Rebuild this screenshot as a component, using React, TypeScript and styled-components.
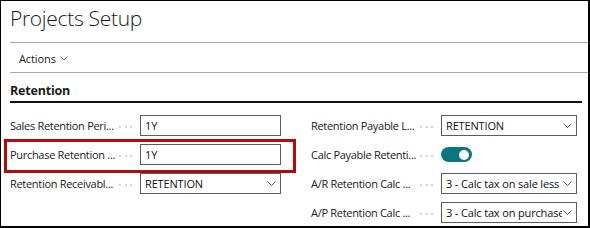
import React from "react";
import styled, { createGlobalStyle } from "styled-components";

const Global = createGlobalStyle`
  html, body { margin: 0; padding: 0; background: #fff; }
  body { font-family: "Open Sans", "Segoe UI", sans-serif; color: #212121; }
  * { box-sizing: border-box; }
`;

const Frame = styled.div`
  width: 590px;
  height: 228px;
  border-style: solid;
  border-color: #000;
  border-width: 1px 2px 2px 1px;
  background: #fff;
  display: flex;
  flex-direction: column;
  overflow: hidden;
`;

const TitleBar = styled.div`
  margin-left: 9px;
  height: 42px;
  border-bottom: 1px solid #a9a9a9;
  display: flex;
  align-items: center;
  padding-bottom: 8px;
`;

const Title = styled.h1`
  margin: 0;
  font-family: "Open Sans", sans-serif;
  font-weight: 300;
  font-size: 21px;
  letter-spacing: -0.3px;
  color: #1a1a1a;
`;

const ActionBar = styled.div`
  margin-left: 9px;
  height: 30px;
  border-bottom: 1px solid #a9a9a9;
  display: flex;
  align-items: center;
  padding-left: 9px;
  padding-top: 1px;
  gap: 4px;
  font-size: 11px;
  letter-spacing: -0.1px;
  color: #212121;
`;

const SectionHeader = styled.div`
  margin-left: 9px;
  margin-right: 6px;
  height: 30px;
  border-bottom: 2px solid #111;
  display: flex;
  align-items: center;
  padding-top: 6px;
  font-size: 12.5px;
  font-weight: 700;
  letter-spacing: -0.2px;
  color: #1a1a1a;
`;

const Columns = styled.div`
  display: grid;
  grid-template-columns: 271px 266px;
  column-gap: 30px;
  padding: 12px 0 0 9px;
`;

const Column = styled.div`
  display: flex;
  flex-direction: column;
  gap: 8px;
`;

const Row = styled.div`
  position: relative;
  display: grid;
  grid-template-columns: 107px 23px 1fr;
  align-items: center;
  height: 21px;
`;

const Label = styled.span`
  font-size: 11px;
  letter-spacing: -0.3px;
  white-space: nowrap;
  overflow: hidden;
  color: #212121;
`;

const Dots = styled.span`
  display: flex;
  gap: 3.5px;
  padding-left: 2px;
  padding-top: 2px;
  & > i {
    width: 2px;
    height: 2px;
    border-radius: 1px;
    background: #c4c4c4;
  }
`;

const Input = styled.div`
  height: 21px;
  border: 1px solid #5c5c5c;
  display: flex;
  align-items: center;
  padding: 0 4px;
  font-size: 11px;
  letter-spacing: -0.15px;
  color: #111;
  overflow: hidden;
  white-space: nowrap;
  gap: 1px;
`;

const InputText = styled.span`
  flex: 1;
  overflow: hidden;
  white-space: nowrap;
`;

const Toggle = styled.div`
  width: 31px;
  height: 15px;
  border-radius: 8px;
  background: #0b7680;
  display: flex;
  align-items: center;
  justify-content: flex-end;
  padding-right: 3px;
  & > span {
    width: 10px;
    height: 10px;
    border-radius: 50%;
    background: #fff;
  }
`;

const Highlight = styled.div`
  position: absolute;
  left: -6px;
  top: -5px;
  width: 292px;
  height: 34px;
  border: 3px solid #b40a0a;
  pointer-events: none;
`;

const Chevron = ({ w = 9, color = "#555" }: { w?: number; color?: string }) => (
  <svg width={w} height={w / 2 + 1} viewBox={`0 0 ${w} ${w / 2 + 1}`} style={{ flex: "none" }}>
    <polyline points={`0.5,0.5 ${w / 2},${w / 2} ${w - 0.5},0.5`} fill="none" stroke={color} strokeWidth="1" />
  </svg>
);

const DotSep = () => (
  <Dots>
    <i />
    <i />
    <i />
  </Dots>
);

type Field = { label: string; value?: string; select?: boolean; toggle?: boolean; highlight?: boolean };

const left: Field[] = [
  { label: "Sales Retention Peri...", value: "1Y" },
  { label: "Purchase Retention ...", value: "1Y", highlight: true },
  { label: "Retention Receivabl...", value: "RETENTION", select: true },
];

const right: Field[] = [
  { label: "Retention Payable L...", value: "RETENTION", select: true },
  { label: "Calc Payable Retenti...", toggle: true },
  { label: "A/R Retention Calc ...", value: "3 - Calc tax on sale less th", select: true },
  { label: "A/P Retention Calc ...", value: "3 - Calc tax on purchase le", select: true },
];

const FieldRow = ({ f }: { f: Field }) => (
  <Row>
    <Label>{f.label}</Label>
    <DotSep />
    {f.toggle ? (
      <Toggle>
        <span />
      </Toggle>
    ) : (
      <Input>
        <InputText>{f.value}</InputText>
        {f.select && <Chevron />}
      </Input>
    )}
    {f.highlight && <Highlight />}
  </Row>
);

export default function App() {
  return (
    <>
      <Global />
      <Frame>
        <TitleBar>
          <Title>Projects Setup</Title>
        </TitleBar>
        <ActionBar>
          Actions <Chevron w={8} color="#666" />
        </ActionBar>
        <SectionHeader>Retention</SectionHeader>
        <Columns>
          <Column>
            {left.map((f) => (
              <FieldRow key={f.label} f={f} />
            ))}
          </Column>
          <Column>
            {right.map((f) => (
              <FieldRow key={f.label} f={f} />
            ))}
          </Column>
        </Columns>
      </Frame>
    </>
  );
}
